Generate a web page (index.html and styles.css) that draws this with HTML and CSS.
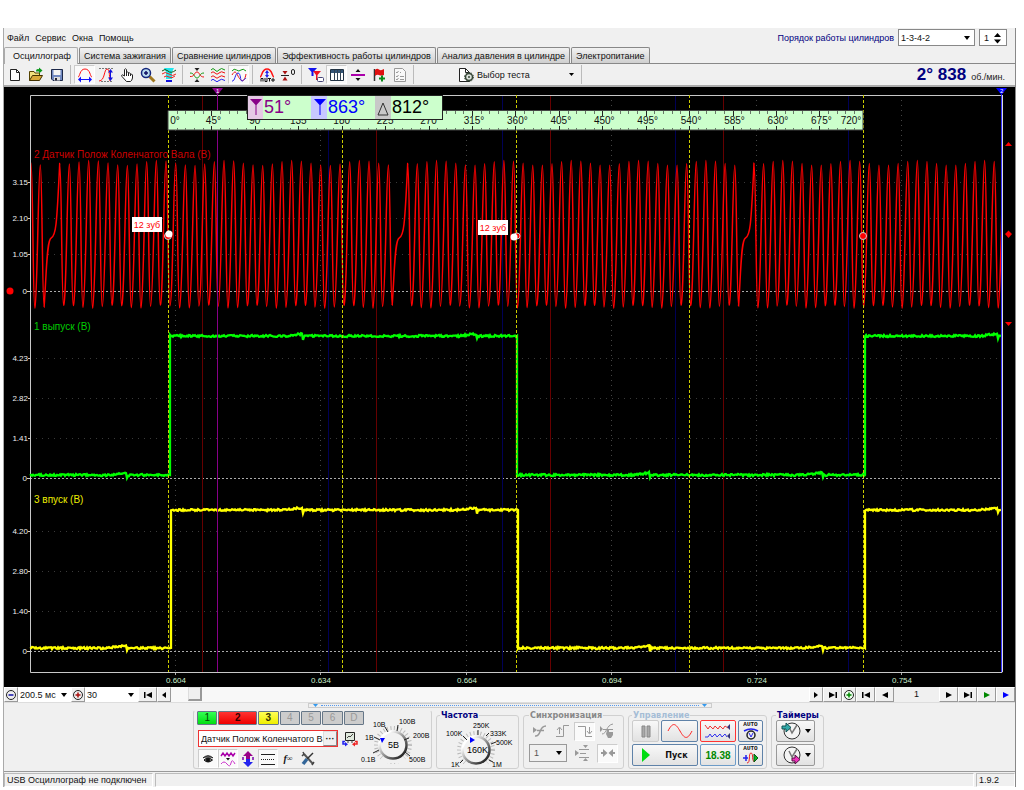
FILE: index.html
```html
<!DOCTYPE html>
<html lang="ru">
<head>
<meta charset="utf-8">
<title>USB Осциллограф</title>
<link rel="stylesheet" href="styles.css">
</head>
<body>
<main class="app">
  <header class="menubar">
    <nav class="menu">
      <button class="menu-item">Файл</button>
      <button class="menu-item">Сервис</button>
      <button class="menu-item">Окна</button>
      <button class="menu-item">Помощь</button>
    </nav>
    <div class="order">
      <label class="order-label" for="order">Порядок работы цилиндров</label>
      <select id="order" class="select order-select"><option>1-3-4-2</option></select>
      <span class="spin">
        <input class="spin-input" type="number" value="1" aria-label="Номер цилиндра">
        <svg width="9" height="12" viewBox="0 0 9 12"><path d="M1 5L4.500 1L8 5zM1 7.500L4.500 11.500L8 7.500z"/></svg>
      </span>
    </div>
  </header>

  <div class="tabs" role="tablist">
    <button class="tab tab-active" role="tab" aria-selected="true">Осциллограф</button>
    <button class="tab" role="tab">Система зажигания</button>
    <button class="tab" role="tab">Сравнение цилиндров</button>
    <button class="tab" role="tab">Эффективность работы цилиндров</button>
    <button class="tab" role="tab">Анализ давления в цилиндре</button>
    <button class="tab" role="tab">Электропитание</button>
  </div>

  <div class="toolbar">
    <button class="tool" aria-label="Новый"><svg viewBox="0 0 16 16"><path d="M3.500 2.500H9.500L12.500 5.500V13.500H3.500z" fill="#fff" stroke="#222"/><path d="M9.500 2.500V5.500H12.500" fill="none" stroke="#222"/></svg></button>
    <button class="tool" aria-label="Открыть"><svg viewBox="0 0 16 16"><path d="M1.500 13.500V4.500H6L7 6H11.500V8" fill="#f0e080" stroke="#554400"/><path d="M1.500 13.500L4.500 8.500H14.500L11.500 13.500z" fill="#d8a93a" stroke="#443300"/><path d="M8 4.500C8 2 10 1.500 11 2.500V0.500L14.500 3.500L11 6.500V4.500z" fill="#0b9a1c"/></svg></button>
    <button class="tool" aria-label="Сохранить"><svg viewBox="0 0 16 16"><path d="M2.500 2.500H13.500V13.500H4L2.500 12z" fill="#7088c0" stroke="#1c2848"/><path d="M4.500 3H11.500V8H4.500z" fill="#f4f4f4"/><path d="M5 10H11V13.500H5z" fill="#ddd"/><path d="M6 11H8V13.500H6z" fill="#223"/></svg></button>
    <i class="sep"></i>
    <button class="tool tool-on" aria-label="Период"><svg viewBox="0 0 16 16"><path d="M1 10C3 10 2.500 2 8 2S13 10 15 10" fill="none" stroke="#f11"/><path d="M1 12.500L4 9.500V12H12V9.500L15 12.500L12 15.500V13H4V15.500z" fill="#11f"/></svg></button>
    <button class="tool" aria-label="Амплитуда"><svg viewBox="0 0 16 16"><path d="M1 14C7 14 6 2 9 2S11 8 12 14" fill="none" stroke="#f11"/><path d="M1 1.500H15M3 14.500H15" stroke="#777" stroke-dasharray="2 1"/><path d="M12.500 2L15 5.500H13V10.500H15L12.500 14L10 10.500H12V5.500H10z" fill="#11d"/></svg></button>
    <button class="tool" aria-label="Рука"><svg viewBox="0 0 16 16"><path d="M5.500 9V2.500Q6.500 1 7.500 2.500V7V5.500Q8.500 4.500 9.500 5.500V7V6Q10.500 5.500 11.500 6.500V7.500Q13 6.500 13.500 8V11Q13 13.500 11.500 14.500H7.500L3 9.500Q2 8 3.500 7.800z" fill="#fff" stroke="#222"/><path d="M7.500 7V9M9.500 7V9M11.500 7V9" stroke="#222"/></svg></button>
    <button class="tool" aria-label="Масштаб"><svg viewBox="0 0 16 16"><path d="M9.500 9.500L14.500 14.500" stroke="#a07820" stroke-width="3"/><circle cx="6" cy="6" r="4.500" fill="#bde" stroke="#14267c" stroke-width="1.500"/><path d="M4 6H8M6 4V8" stroke="#116" stroke-width="1.500"/></svg></button>
    <button class="tool" aria-label="Сигнал"><svg viewBox="0 0 16 16"><path d="M3 1H13L11 5V12H5V5z" fill="#21e5ec"/><path d="M1 4Q4 1 7 4T15 3" fill="none" stroke="#151"/><path d="M1 7Q4 4 8 7T15 7M3 10Q5 8 8 10T14 9" fill="none" stroke="#e22"/><path d="M5 13H11V15H5z" fill="#11d"/></svg></button>
    <i class="sep"></i>
    <button class="tool" aria-label="Совместить"><svg viewBox="0 0 16 16"><path d="M1 6C6 6 5 11 8 11S10 6 15 6" fill="none" stroke="#191"/><path d="M1 9.500C6 10 5 5 8 5S10 10 15 10" fill="none" stroke="#e11"/><path d="M5.500 1H10.500L8 4zM5.500 15H10.500L8 12z" fill="#222"/></svg></button>
    <button class="tool" aria-label="Разнести"><svg viewBox="0 0 16 16"><g fill="none"><path d="M1 3Q3 0 5 3T9 3T15 3" stroke="#191"/><path d="M1 6Q3 3.500 5 6T9 6T15 6M1 10Q3 7.500 5 10T9 10T15 10" stroke="#e11"/><path d="M1 13.500Q3 11 5 13.500T9 13.500T15 13.500" stroke="#22e"/></g></svg></button>
    <button class="tool tool-on" aria-label="Наложить"><svg viewBox="0 0 16 16"><g fill="none"><path d="M1 4Q3 1 5.500 3T10 3T15 4" stroke="#191"/><path d="M1 8C4 3 5 5 7 9S13 18 15 7" stroke="#e11"/><path d="M1 14C4 15 4 6 7 6S9 14 11 14S14 10 15 12" stroke="#22e"/></g></svg></button>
    <i class="sep"></i>
    <button class="tool" aria-label="Авто"><svg viewBox="0 0 16 16"><path d="M1 10C3 10 2.500 2 8 2S13 10 15 10" fill="none" stroke="#f11" stroke-width="1.500"/><path d="M8 3L10 6H8.700V8H10L8 11L6 8H7.300V6H6z" fill="#22e"/><path d="M2 14.500V11.500H4V14.500M6 11V14.500H8V11M9 11.500H12M10.500 11V14.500M13 12H15V14H13z" fill="none" stroke="#111"/></svg></button>
    <button class="tool" aria-label="Ноль"><svg viewBox="0 0 16 16"><path d="M1 8.500H9" stroke="#222"/><path d="M2.500 4H7.500L5 7.500zM2.500 13.500H7.500L5 9.500z" fill="#a11"/><rect x="11.500" y="2.500" width="3" height="5" rx="1.500" fill="none" stroke="#222"/></svg></button>
    <i class="sep"></i>
    <button class="tool" aria-label="Линейка"><svg viewBox="0 0 16 16"><path d="M0 1H9L5.500 5V9H3.500V5z" fill="#11e"/><path d="M5 4H13L9.500 8V13H8V8z" fill="#e12"/><rect x="9.500" y="10.500" width="6" height="4" rx="1" fill="#fff" stroke="#447"/></svg></button>
    <button class="tool tool-on" aria-label="Таблица"><svg viewBox="0 0 16 16"><path d="M1.500 2.500H14.500V13.500H1.500z" fill="#fff" stroke="#234"/><path d="M2 3H14V6H2z" fill="#357"/><path d="M5.500 3V13M8.500 3V13M11.500 3V13" stroke="#345"/></svg></button>
    <button class="tool" aria-label="Уровень"><svg viewBox="0 0 16 16"><path d="M1 8H15" stroke="#a0a" stroke-width="2"/><path d="M8 2L10.500 5H5.500zM8 14L10.500 11H5.500z" fill="#111"/></svg></button>
    <button class="tool" aria-label="Маркер"><svg viewBox="0 0 16 16"><path d="M3.500 2V14" stroke="#333" stroke-width="1.500"/><path d="M4 3Q6 1 8 2.500T13 2V8Q10 9 8 8T4 9z" fill="#e01010"/><path d="M8 11.500H14M11 8.500V14.500" stroke="#0a8a1a" stroke-width="2"/></svg></button>
    <button class="tool" aria-label="Отчёт"><svg viewBox="0 0 16 16"><path d="M2.500 1.500H10.500L13.500 4.500V14.500H2.500z" fill="#f8f8f8" stroke="#999"/><path d="M4 5L5 6L6.500 4M4 9L5 10L6.500 8M4 12L5 13L6.500 11M8 5.500H9M8 9.500H12M8 12.500H12" fill="none" stroke="#999"/></svg></button>
    <i class="sep"></i>
    <button class="test">
      <svg width="18" height="16" viewBox="0 0 18 16"><path d="M2.500 1.500H8.500L12.500 5.500V14.500H2.500z" fill="#fff" stroke="#222"/><path d="M8.500 1.500V5.500H12.500" fill="none" stroke="#222"/><circle cx="12" cy="10" r="3.500" fill="#dde4dd" stroke="#354535" stroke-width="1.500"/><circle cx="12" cy="10" r="4.500" fill="none" stroke="#354535" stroke-dasharray="1.500 1.300"/><circle cx="12" cy="10" r="1" fill="#354535"/></svg>
      <span class="test-name">Выбор теста</span>
      <svg width="5" height="3" viewBox="0 0 5 3"><path d="M0 0H5L2.500 3z"/></svg>
    </button>
    <i class="sep"></i>
    <div class="rpm"><strong class="rpm-value">2° 838</strong><span>об./мин.</span></div>
  </div>

  <svg class="scope" id="scope" viewBox="4 87 1011 600" role="img" aria-label="Осциллограммы">
    <rect x="4" y="87" width="1011" height="600"/>
    <g id="grid"></g>
    <g id="traces" fill="none"></g>
    <g id="marks"></g>
    <g class="readout">
      <rect x="247.500" y="95.500" width="195" height="24" fill="#cfc" stroke="#222"/>
      <path d="M248 96H263V119H248z" fill="#e5cae5"/><path d="M311 96H327V119H311z" fill="#c8c8ff"/><path d="M375 96H391V119H375z" fill="#c8c8c8"/>
      <path d="M250 99H262L256.500 105V115H255.500V105z" fill="#808"/>
      <path d="M314 99H326L320.500 105V115H319.500V105z" fill="#00f"/>
      <path d="M383 103L388 115H378z" fill="none" stroke="#333"/>
      <text x="264" y="113" fill="#808">51°</text><text x="328" y="113" fill="#00f">863°</text><text x="392" y="113" fill="#000">812°</text>
    </g>
  </svg>

  <div class="navbar">
    <button class="nav nav-s" aria-label="Уменьшить"><svg viewBox="0 0 12 12"><circle cx="6" cy="6" r="4.500" fill="#eee" stroke="#222"/><path d="M3.500 6H8.500" stroke="#11a" stroke-width="1.500"/></svg></button>
    <select class="select nav-select" aria-label="Развёртка"><option>200.5 мс</option></select>
    <button class="nav nav-s" aria-label="Увеличить"><svg viewBox="0 0 12 12"><circle cx="6" cy="6" r="4.500" fill="#eee" stroke="#222"/><path d="M3.500 6H8.500M6 3.500V8.500" stroke="#a11" stroke-width="1.500"/></svg></button>
    <select class="select nav-select" aria-label="Масштаб"><option>30</option></select>
    <button class="nav" aria-label="В начало"><svg viewBox="0 0 12 12"><path d="M2 3H3.500V9H2zM10 3V9L4 6z"/></svg></button>
    <button class="nav nav-s" aria-label="Влево"><svg viewBox="0 0 12 12"><path d="M8 3V9L4 6z"/></svg></button>
    <div class="track"><div class="thumb"></div></div>
    <button class="nav nav-s" aria-label="Вправо"><svg viewBox="0 0 12 12"><path d="M4 3V9L8 6z"/></svg></button>
    <button class="nav" aria-label="В конец"><svg viewBox="0 0 12 12"><path d="M10 3H8.500V9H10zM2 3V9L8 6z"/></svg></button>
    <button class="nav nav-s" aria-label="Добавить"><svg viewBox="0 0 12 12"><circle cx="6" cy="6" r="4.500" fill="#efe" stroke="#222"/><path d="M3.500 6H8.500M6 3.500V8.500" stroke="#080" stroke-width="1.500"/></svg></button>
    <button class="nav" aria-label="Первый кадр"><svg viewBox="0 0 12 12"><path d="M2 3H3.500V9H2zM10 3V9L4 6z"/></svg></button>
    <button class="nav" aria-label="Предыдущий кадр"><svg viewBox="0 0 12 12"><path d="M9 3V9L3 6z"/></svg></button>
    <output class="frame-no">1</output>
    <button class="nav" aria-label="Следующий кадр"><svg viewBox="0 0 12 12"><path d="M3 3V9L9 6z"/></svg></button>
    <button class="nav" aria-label="Последний кадр"><svg viewBox="0 0 12 12"><path d="M10 3H8.500V9H10zM2 3V9L8 6z"/></svg></button>
    <button class="nav" aria-label="Воспроизвести"><svg viewBox="0 0 12 12"><path d="M3 3V9L9 6z" fill="#080"/></svg></button>
    <button class="nav" aria-label="Продолжить"><svg viewBox="0 0 12 12"><path d="M3 3V9L9 6z" fill="#00f"/></svg></button>
  </div>

  <div class="splitter"><div class="grip"><svg width="5" height="3" viewBox="0 0 5 3"><path d="M0 0H5L2.500 3z" fill="#39e"/></svg><i class="grip-dots"></i><svg width="5" height="3" viewBox="0 0 5 3"><path d="M0 0H5L2.500 3z" fill="#39e"/></svg></div></div>

  <section class="panel">
    <div class="group channels">
      <div class="channel-main">
        <div class="channel-row">
          <button class="ch ch-1">1</button><button class="ch ch-2">2</button><button class="ch ch-3">3</button><button class="ch" disabled>4</button><button class="ch" disabled>5</button><button class="ch" disabled>6</button><button class="ch" disabled>D</button>
        </div>
        <div class="name-row">
          <div class="name-box"><input class="name-input" value="Датчик Полож Коленчатого Вала" aria-label="Название канала"><button class="dots" aria-label="Выбрать">···</button></div>
          <button class="tool" aria-label="Инверсия"><svg viewBox="0 0 16 16"><path d="M3.500 1.500H12.500V9.500H3.500z" fill="#dfe8dd" stroke="#222"/><path d="M5 7L7 5L8 6L11 3M6 9.500V12M10 9.500V12" fill="none" stroke="#444"/><path d="M3 10.500H1V13H3" fill="none" stroke="#22e" stroke-width="1.500"/><path d="M3 11V15.500L6 13.300z" fill="#22e"/><path d="M13 10.500H15V13H13" fill="none" stroke="#e22" stroke-width="1.500"/><path d="M13 11V15.500L10 13.300z" fill="#e22"/></svg></button>
        </div>
        <div class="icon-row">
          <button class="tool tool-on" aria-label="Показать"><svg viewBox="0 0 16 16"><path d="M3 7Q8 2.500 13 7M4 9Q8 5 12.500 9Q8 13 4 9z" fill="#777" stroke="#111"/><circle cx="8" cy="9" r="2" fill="#111"/></svg></button>
          <button class="tool tool-on" aria-label="Фильтр"><svg viewBox="0 0 16 16"><path d="M1 5L3 2L5 5L7 2L9 5L11 2L13 5L15 2" fill="none" stroke="#a0a" stroke-width="1.500"/><path d="M6 7H10L8 9.500z" fill="#111"/><path d="M1 13Q4 9 7 13T11 12T15 13" fill="none" stroke="#c3c"/></svg></button>
          <button class="tool" aria-label="Сдвиг"><svg viewBox="0 0 16 16"><path d="M8 0L13 5H10V8H6V5H3z" fill="#908"/><path d="M8 16L13 11H10V8H6V11H3z" fill="#22e"/><path d="M3 6V9M13 6V9" stroke="#70a" stroke-width="1.500"/></svg></button>
          <button class="tool tool-on" aria-label="Линии"><svg viewBox="0 0 16 16"><path d="M1 3.500H15M1 13.500H15" stroke="#222"/><path d="M1 8.500H15" stroke="#222" stroke-dasharray="1 1"/></svg></button>
          <button class="tool fx" aria-label="Функция"><i>f</i><sub>∞</sub></button>
          <button class="tool" aria-label="Настройка"><svg viewBox="0 0 16 16"><path d="M4 3L13 13" stroke="#555" stroke-width="2"/><path d="M13 2L7 8" stroke="#333" stroke-width="1.500"/><path d="M7 8L3 13" stroke="#369" stroke-width="3.500"/><path d="M2 5L4 3L3 1M12 14L14 11" fill="none" stroke="#444" stroke-width="1.500"/></svg></button>
        </div>
      </div>
      <svg class="knob" width="64" height="56" viewBox="365 715 64 56" role="img" aria-label="Диапазон 5В">
        <use href="#dial" x="394" y="749"/>
        <path d="M381 742H386L383 747z" fill="#00f"/>
        <path d="M374 757L380 754M375 741L381 744M386 731L389 736M399 729L398 735M410 742L405 744M411 760L406 756" stroke="#222"/>
        <text x="389" y="752">5В</text>
        <g class="knob-scale"><text x="362" y="766">0.1В</text><text x="366" y="744">1В</text><text x="374" y="731">10В</text><text x="400" y="728">100В</text><text x="414" y="742">200В</text><text x="410" y="766">500В</text></g>
      </svg>
    </div>

    <fieldset class="group freq"><legend class="navy">Частота</legend>
      <svg class="knob" width="76" height="50" viewBox="440 719 76 50" role="img" aria-label="Частота 160K">
        <use href="#dial" x="476" y="749"/>
        <path d="M470 736L475 739L470 742z" fill="#00f"/>
        <path d="M463 735L467 739M478 729V734M486 735L489 732M491 743L496 741M463 759L460 762M489 759L493 761" stroke="#222"/>
        <text x="467" y="752">160K</text>
        <g class="knob-scale"><text x="446" y="735">100K</text><text x="473" y="727">250K</text><text x="490" y="735">333K</text><text x="496" y="744">500K</text><text x="451" y="766">1K</text><text x="492" y="766">1M</text></g>
      </svg>
    </fieldset>

    <fieldset class="group sync"><legend class="gray">Синхронизация</legend>
      <div class="sync-row">
        <button class="tool" disabled aria-label="По уровню"><svg viewBox="0 0 16 16"><path d="M3 13C10 14 6 3 14 3M5 7.500H12" fill="none" stroke="#999" stroke-width="1.500"/><path d="M1 4V10L5 7z" fill="#999"/></svg></button>
        <button class="tool" disabled aria-label="По фронту"><svg viewBox="0 0 16 16"><path d="M2 13.500H9.500V2.500H15M5.500 11V5M3 7L5.500 4L8 7" fill="none" stroke="#999"/></svg></button>
        <button class="tool tool-on" disabled aria-label="По спаду"><svg viewBox="0 0 16 16"><path d="M1 3.500H8.500V13.500H15M12.500 4V10M10 8L12.500 11L15 8" fill="none" stroke="#999"/></svg></button>
        <button class="tool" disabled aria-label="Ручная"><svg viewBox="0 0 16 16"><path d="M3 11C8 11 7 2 14 1M4 6.500H14" fill="none" stroke="#999"/><path d="M1 3V9L4 6zM8 7H10V9H14V12L12 15H9L7 11z" fill="#999"/></svg></button>
      </div>
      <div class="sync-row">
        <select class="select sync-select" disabled aria-label="Канал синхронизации"><option>1</option></select>
        <button class="tool" disabled aria-label="Уровни"><svg viewBox="0 0 16 16"><path d="M5 4.500H15M5 12.500H15M6 8.500H12" fill="none" stroke="#999"/><path d="M1 5V11L5 8zM9 0H14L11.500 3zM9 16H14L11.500 13z" fill="#999"/></svg></button>
        <button class="tool tool-on" disabled aria-label="Центр"><svg viewBox="0 0 16 16"><path d="M1 7H3V4L7.500 8L3 12V9H1zM15 7H13V4L8.500 8L13 12V9H15z" fill="#999"/></svg></button>
      </div>
    </fieldset>

    <fieldset class="group control"><legend class="pale">Управление</legend>
      <div class="control-grid">
        <button class="btn btn-off" disabled aria-label="Пауза"><svg width="10" height="13" viewBox="0 0 10 13"><path d="M1 1H4V12H1zM6 1H9V12H6z" fill="#aaa" stroke="#888"/></svg></button>
        <button class="btn btn-blue" aria-label="Синус"><svg width="26" height="18" viewBox="0 0 26 18"><path d="M1 9C6-1 9 2 13 9S20 19 25 9" fill="none" stroke="#f22"/></svg></button>
        <button class="btn btn-red" aria-label="Запись"><svg width="28" height="17" viewBox="0 0 28 17"><path d="M1 2L4 6L6 3L9 6L11 3L14 6L16 3L19 6L21 3L24 5" fill="none" stroke="#e33"/><path d="M1 14H4L6 11L8 14L11 11L13 14L16 11L18 14L21 11L23 14" fill="none" stroke="#33e"/><path d="M26 1V7L23 4zM26 10V16L23 13z" fill="#337"/></svg></button>
        <button class="btn btn-blue auto"><span>AUTO</span><svg width="16" height="12" viewBox="0 0 16 12"><path d="M1 3Q8-1 15 3" fill="none" stroke="#22e" stroke-width="1.500"/><circle cx="8" cy="7" r="4" fill="#eee" stroke="#222" stroke-width="1.500"/><path d="M6 5L8 9L10 5" fill="none" stroke="#22e"/></svg></button>
        <button class="btn btn-blue start"><svg width="8" height="14" viewBox="0 0 8 14"><path d="M0 0L8 7L0 14z" fill="#0d1"/></svg><span>Пуск</span></button>
        <button class="btn btn-time">18.38</button>
        <button class="btn btn-blue auto"><span>AUTO</span><svg width="16" height="12" viewBox="0 0 16 12"><path d="M0 6H5M3 3V9" fill="none" stroke="#22e" stroke-width="1.500"/><path d="M4 11C8 11 5 1 8 1S8 11 12 9" fill="none" stroke="#e22"/><path d="M11 2L15 6L11 10z" fill="#0b2" stroke="#151"/></svg></button>
      </div>
    </fieldset>

    <fieldset class="group timers"><legend class="navy">Таймеры</legend>
      <div class="timer-list">
        <button class="btn timer" aria-label="Таймер пуска"><svg width="22" height="20" viewBox="0 0 22 20"><circle cx="12" cy="10" r="8" fill="#f4f4f4" stroke="#333"/><path d="M9 6L12 12L17 4" fill="none" stroke="#777" stroke-width="1.500"/><path d="M2 5H6V2L11 6.500L6 11V8H2z" fill="#3aa" stroke="#155"/></svg><svg width="6" height="4" viewBox="0 0 6 4"><path d="M0 0H6L3 4z"/></svg></button>
        <button class="btn timer" aria-label="Таймер остановки"><svg width="22" height="20" viewBox="0 0 22 20"><circle cx="12" cy="10" r="8" fill="#f4f4f4" stroke="#333"/><path d="M9 6L12 12L17 4" fill="none" stroke="#777" stroke-width="1.500"/><path d="M12 13H15V10L20 14.500L15 19V16H12z" fill="#e3b" stroke="#514"/></svg><svg width="6" height="4" viewBox="0 0 6 4"><path d="M0 0H6L3 4z"/></svg></button>
      </div>
    </fieldset>
  </section>

  <footer class="status"><span class="cell cell-main">USB Осциллограф не подключен</span><span class="cell cell-fill"></span><span class="cell cell-ver">1.9.2</span></footer>
</main>
<svg class="defs" width="0" height="0" aria-hidden="true"><defs>
  <linearGradient id="rim" x1="0" y1="0" x2="1" y2="1"><stop offset="0.200" stop-color="#fff"/><stop offset="0.500" stop-color="#999"/><stop offset="1" stop-color="#000"/></linearGradient>
  <g id="dial"><circle r="17" fill="none" stroke="#bbb" stroke-width="4" stroke-dasharray="1 2.500"/><path d="M-16 18L0 0L16 18z" fill="#f0f0f0"/><circle r="13.500" fill="#f2f2f2" stroke="url(#rim)" stroke-width="2.500"/></g>
</defs></svg>
<script src="script.js"></script>
</body>
</html>
```
FILE: styles.css
```css
* { box-sizing: border-box; }
body {
  margin: 0;
  padding: 28px 8px 4px 3px;
  background: #fff;
  color: #111;
  font: 9px/12px "Liberation Sans", Arial, sans-serif;
}
button, input, select { font: inherit; color: inherit; margin: 0; padding: 0; border: 0; border-radius: 0; background: none; }
button { flex: none; }
svg { flex: none; display: block; }
.app { background: #f0f0f0; border-left: 1px solid #aaa; border-right: 1px solid #888; }
.defs { position: absolute; }

.menubar { display: flex; justify-content: space-between; height: 19px; padding: 0 8px 0 3px; }
.menu { display: flex; align-items: center; gap: 6px; }
.order { display: flex; align-items: center; gap: 4px; }
.order-label { color: #000080; }
.select {
  appearance: none;
  border: 1px solid #888;
  background: #fff url("data:image/svg+xml,%3Csvg xmlns='http://www.w3.org/2000/svg' width='6' height='4'%3E%3Cpath d='M0 0H6L3 4z'/%3E%3C/svg%3E") no-repeat right 4px center;
  padding: 0 12px 0 2px;
}
.order-select { width: 77px; height: 17px; }
.spin { display: flex; align-items: center; width: 28px; height: 17px; padding: 0 4px; background: #fff; border: 1px solid #888; }
.spin-input { flex: 1; min-width: 0; appearance: textfield; outline: 0; }
.spin-input::-webkit-inner-spin-button { display: none; }

.tabs { display: flex; align-items: flex-end; gap: 1px; height: 17px; border-bottom: 1px solid #888; }
.tab { height: 16px; padding: 0 4px; border: 1px solid #888; border-bottom: 0; border-radius: 2px 2px 0 0; background: linear-gradient(#f2f2f2, #cfcfcf); white-space: nowrap; }
.tab-active { height: 17px; padding: 0 6px 0 8px; margin-bottom: -1px; background: #f0f0f0; border-color: #aaa; }

.toolbar { display: flex; align-items: center; height: 23px; border-bottom: 2px solid #aaa; }
.tool { display: flex; align-items: center; justify-content: center; width: 21px; height: 19px; }
.tool svg { width: 16px; height: 16px; }
.tool-on { background: #fafafa; border: 1px solid #ccc; border-right-color: #fff; border-bottom-color: #fff; }
.sep { flex: none; width: 1px; height: 19px; margin: 0 3px; background: #bbb; }
.test { display: flex; align-items: center; gap: 2px; width: 161px; padding: 0 4px 0 40px; }
.test-name { flex: 1; text-align: left; white-space: nowrap; }
.rpm { display: flex; align-items: baseline; gap: 5px; margin-left: auto; padding-right: 10px; color: #222; }
.rpm-value { color: #000080; font: bold 17px/20px "Liberation Sans", Arial, sans-serif; }

.scope { width: 100%; height: auto; font-size: 10px; }
.scope text { font-family: "Liberation Sans", Arial, sans-serif; }
.scope .axis { font-size: 8px; fill: #eee; }
.scope .time { font-size: 8px; fill: #cec; text-anchor: middle; }
.scope .deg { font-size: 10px; fill: #111; text-anchor: middle; }
.scope .note { font-size: 9px; fill: #f00; text-anchor: middle; }
.scope .readout text { font-size: 18px; }
.scope .end { text-anchor: end; }

.navbar { display: flex; height: 15px; background: #f0f0f0; }
.nav { display: flex; align-items: center; justify-content: center; width: 19px; border: 1px solid #fff; border-right-color: #999; border-bottom-color: #999; background: #f0f0f0; }
.nav-s { width: 14px; }
.nav svg { width: 12px; height: 12px; }
.nav-select { width: 53px; border: 0; }
.track { flex: 1; background: #f8f8f8; }
.thumb { width: 14px; height: 14px; margin-left: 17px; border: 1px solid #ddd; border-right: 2px solid #999; border-bottom: 2px solid #999; background: #f0f0f0; }
.frame-no { width: 45px; text-align: center; line-height: 15px; }

.splitter { display: flex; justify-content: center; height: 6px; border-top: 1px solid #ddd; }
.grip { display: flex; align-items: center; gap: 3px; width: 404px; height: 5px; padding: 0 4px; border: 1px solid #ccc; }
.grip-dots { flex: 1; border-top: 1px dotted #59e; }

.panel { display: flex; justify-content: center; gap: 4px; height: 64px; padding: 2px 2px 2px 0; border-bottom: 1px solid #999; }
.group { margin: 0; padding: 0 3px; min-width: 0; border: 1px solid #d0d0d0; border-radius: 3px; }
legend { padding: 0 1px; font: bold 9px/10px "DejaVu Sans Condensed", "DejaVu Sans", sans-serif; }
.navy { color: #000080; }
.gray { color: #888; }
.pale { color: #a5bdd6; }
.channels { display: flex; width: 239px; border-top-color: transparent; }
.channel-main { display: flex; flex-direction: column; width: 167px; }
.channel-row { display: flex; gap: 1px; }
.ch { flex: 1; height: 14px; border: 1px solid #678; border-radius: 1px; background: #ccc; color: #999; font-size: 10px; }
.ch-1 { background: linear-gradient(#3f5, #0d1); color: #040; }
.ch-2 { flex: 2; background: linear-gradient(#f33, #e00); color: #300; font-weight: bold; }
.ch-3 { background: linear-gradient(#ff5, #ee0); color: #330; font-weight: bold; }
.name-row { display: flex; align-items: center; justify-content: space-between; padding: 4px 4px 0 1px; }
.name-box { display: flex; width: 140px; height: 17px; border: 1px solid #e33; background: #fff; }
.name-input { flex: 1; min-width: 0; padding-left: 2px; outline: 0; }
.dots { width: 14px; border: 1px solid #ddd; border-right-color: #888; border-bottom-color: #888; background: #f0f0f0; font-weight: bold; }
.icon-row { display: flex; padding: 1px; }
.icon-row .tool { width: 20px; }
.fx { font: bold 10px "Liberation Serif", serif; }
.fx sub { font-size: 8px; }
.knob { overflow: visible; font: 9px "Liberation Sans", Arial, sans-serif; }
.knob-scale { font-size: 7px; }

.freq { width: 83px; }
.sync { width: 101px; padding: 0 5px; }
.sync-row { display: flex; justify-content: space-between; height: 22px; align-items: center; }
.sync-select { width: 38px; height: 18px; padding-left: 4px; background-color: #f0f0f0; color: #555; border-color: #999; opacity: 1; }
.control { width: 139px; }
.control-grid { display: grid; grid-template-columns: 27px 37px 36px 25px; gap: 2px; }
.btn { display: flex; align-items: center; justify-content: center; height: 22px; border: 1px solid #999; border-radius: 2px; background: linear-gradient(#f8f8f8, #e2e2e2); }
.btn-off { border-color: #ccc; }
.btn-blue { border-color: #5f82a8; }
.btn-red { border: 1px solid #f33; }
.btn-time { border-color: #6d9cc8; color: #080; font: bold 10px "Liberation Sans", Arial, sans-serif; }
.start { grid-column: span 2; gap: 15px; font: bold 9px "DejaVu Sans Condensed", "DejaVu Sans", sans-serif; }
.auto { flex-direction: column; font: bold 6px/6px "Liberation Mono", monospace; }
.timers { width: 53px; padding: 0 4px; }
.timer-list { display: grid; gap: 2px; }
.timer { width: 39px; gap: 3px; }

.status { display: flex; gap: 2px; height: 14px; margin-top: 1px; }
.cell { border: 1px solid #bbb; border-right-color: #fff; border-bottom-color: #fff; padding: 0 2px; white-space: nowrap; }
.cell-main { width: 149px; }
.cell-fill { flex: 1; }
.cell-ver { width: 39px; }
```
FILE: script.js
```js
const LEFT = 30, RIGHT = 1001, TOP = 95, BOTTOM = 672;
const line = (x1, y1, x2, y2, attrs) => `<path d="M${x1} ${y1}L${x2} ${y2}" ${attrs}/>`;
const text = (x, y, s, attrs) => `<text x="${x}" y="${y}" ${attrs}>${s}</text>`;

// Scales of the three channels: zero line and labelled levels.
const scales = [
  { zero: 291, levels: [[182, "3.15"], [218, "2.10"], [254, "1.05"]] },
  { zero: 478, levels: [[358, "4.23"], [398, "2.82"], [438, "1.41"]] },
  { zero: 651, levels: [[531, "4.20"], [571, "2.80"], [611, "1.40"]] }
];
const times = [[176, "0.604"], [321, "0.634"], [467, "0.664"], [612, "0.694"], [757, "0.724"], [902, "0.754"]];

let grid = "";
for (const s of scales) {
  for (const [y, label] of s.levels) {
    grid += line(LEFT, y + 0.5, RIGHT, y + 0.5, 'stroke="#3a3a3a" stroke-dasharray="1 5"');
    grid += text(28, y + 3, label, 'class="axis end"') + line(28, y + 0.5, 31, y + 0.5, 'stroke="#ccc"');
  }
  grid += line(LEFT, s.zero + 0.5, RIGHT, s.zero + 0.5, 'stroke="#aaa" stroke-dasharray="2 2"');
  grid += text(27, s.zero + 3, "0", 'class="axis end"') + line(27, s.zero + 0.5, 31, s.zero + 0.5, 'stroke="#ccc"');
}
for (const [x, label] of times) {
  grid += line(x - 0.5, TOP, x - 0.5, BOTTOM, 'stroke="#444" stroke-dasharray="1 4"');
  grid += line(x - 0.5, BOTTOM, x - 0.5, BOTTOM + 3, 'stroke="#aaa"');
  grid += text(x, 683, label, 'class="time"');
}
for (const x of [202.5, 376.5, 550.5, 723.5]) grid += line(x, TOP, x, BOTTOM, 'stroke="#600"');
for (const x of [328.5, 502.5, 675.5, 848.5]) grid += line(x, TOP, x, BOTTOM, 'stroke="#005"');
grid += '<path d="M30.500 95.500H1002V672.500H30.500z" fill="none" stroke="#c8c8c8"/>';
document.getElementById("grid").innerHTML = grid;

// Crankshaft sensor: toothed wheel signal with a gap before each reference tooth.
const peaks = [[31], [40.3]];
for (let i = 0; i < 35; i++) peaks.push([59.7 + i * 9.667, i === 0]);
for (let i = 0; i < 35; i++) peaks.push([407.7 + i * 9.62, i === 0]);
for (let i = 0; i < 27; i++) peaks.push([754 + i * 9.61, i === 0]);
let crank = "";
peaks.forEach(([x, afterGap], i) => {
  const y = 163 + 2.5 * Math.sin(i * 0.9) - (afterGap ? 2 : 0);
  const low = 306.5 + 1.5 * Math.cos(i * 1.3);
  if (i === 0) crank = `M${x} ${y}`;
  else if (afterGap) crank += `C${x - 13} 270 ${x - 13} 240 ${x - 8.5} 238S${x - 3} 228 ${x} ${y}`;
  else crank += `C${x - 3} 306 ${x - 2} ${y} ${x} ${y}`;
  crank += `C${x + 1.8} ${y} ${x + 2} ${low} ${x + 3.8} ${low}`;
});

// Square pulses with noise and a small step before every ignition point.
const kicks = [127, 303, 477, 650, 823, 998];
function pulses(high, low, edges) {
  let d = "", seed = high, last = null;
  for (let x = LEFT; x <= RIGHT; x++) {
    seed = (seed * 1103 + 12345) % 65536;
    const on = (x >= edges[0] && x < edges[1]) || x >= edges[2];
    let y = (on ? high : low) + (seed / 65536 - 0.5) * 2;
    for (const k of kicks) {
      if (x > k - 18 && x < k) y -= (x - k + 18) / 8;
      if (x === k) y += 3;
    }
    if (last !== null && last !== on) d += `L${x} ${on ? low : high}`;
    d += `${d ? "L" : "M"}${x} ${y.toFixed(1)}`;
    last = on;
  }
  return d;
}
document.getElementById("traces").innerHTML =
  '<clipPath id="plot"><path d="M30 95H1001V672H30z"/></clipPath>' +
  `<path d="${crank}" clip-path="url(#plot)" stroke="#f00" stroke-width="1.500"/>` +
  `<path d="${pulses(336, 475, [170, 517, 865])}" stroke="#0f0" stroke-width="2.300"/>` +
  `<path d="${pulses(510, 648, [171, 518, 865])}" stroke="#ff0" stroke-width="2.300"/>`;

// Cursors, phase ruler, channel names and notes.
let marks = "";
for (const x of [168.5, 342.5, 516.5, 689.5, 863.5]) marks += line(x, TOP, x, BOTTOM, 'stroke="#cc0" stroke-dasharray="3 2"');
marks += line(217.5, 94, 217.5, BOTTOM, 'stroke="#808"') + line(1001.5, 94, 1001.5, BOTTOM, 'stroke="#33f"') + line(1002.5, TOP, 1002.5, BOTTOM, 'stroke="#ddd"');
marks += '<path d="M212 88H223L217.500 95z" fill="#808"/><path d="M996 88H1007L1001.500 95z" fill="#00f"/>';
marks += text(216, 93, "1", 'fill="#fff" font-size="6"') + text(1000, 93, "2", 'fill="#fff" font-size="6"');
marks += '<path d="M168 110.500H863V130H168z" fill="#cfc" stroke="#444"/>';
for (let deg = 9; deg < 720; deg += 9) {
  const x = Math.round(168 + deg * 0.965) + 0.5, len = deg % 45 ? 3 : 5;
  const ink = deg % 45 ? 'stroke="#667766"' : 'stroke="#222"';
  marks += line(x, 111, x, 111 + len, ink) + line(x, 130 - len + 1, x, 130, ink);
}
for (let deg = 0; deg <= 720; deg += 45) {
  const x = deg === 0 ? 175 : deg === 720 ? 851 : 170 + deg * 0.965;
  marks += text(x, 124, deg + "°", 'class="deg"');
}
marks += text(34, 158, "2 Датчик Полож Коленчатого Вала (В)", 'fill="#c00"');
marks += text(34, 330, "1 выпуск (В)", 'fill="#0c0"');
marks += text(34, 503, "3 впуск (В)", 'fill="#ee0"');
for (const [x, y] of [[132, 217], [478, 220]]) {
  marks += `<rect x="${x}" y="${y}" width="30" height="15" fill="#fff"/>` + text(x + 15, y + 11, "12 зуб", 'class="note"');
}
marks += '<g fill="#f00" stroke="#ccc"><circle cx="168" cy="236" r="3.500"/><circle cx="517" cy="236" r="3"/><circle cx="863" cy="236" r="3.500"/></g>';
marks += '<circle cx="169" cy="234" r="3.500" fill="#fff"/><circle cx="514" cy="237" r="3.500" fill="#fff"/>';
marks += '<g fill="#f00"><circle cx="10" cy="291" r="3.500"/><path d="M1005 146H1012L1008.500 142zM1005 322H1012L1008.500 326zM1008.500 230.500L1012 234L1008.500 238L1005 234z"/></g>';
document.getElementById("marks").innerHTML = marks;
```
